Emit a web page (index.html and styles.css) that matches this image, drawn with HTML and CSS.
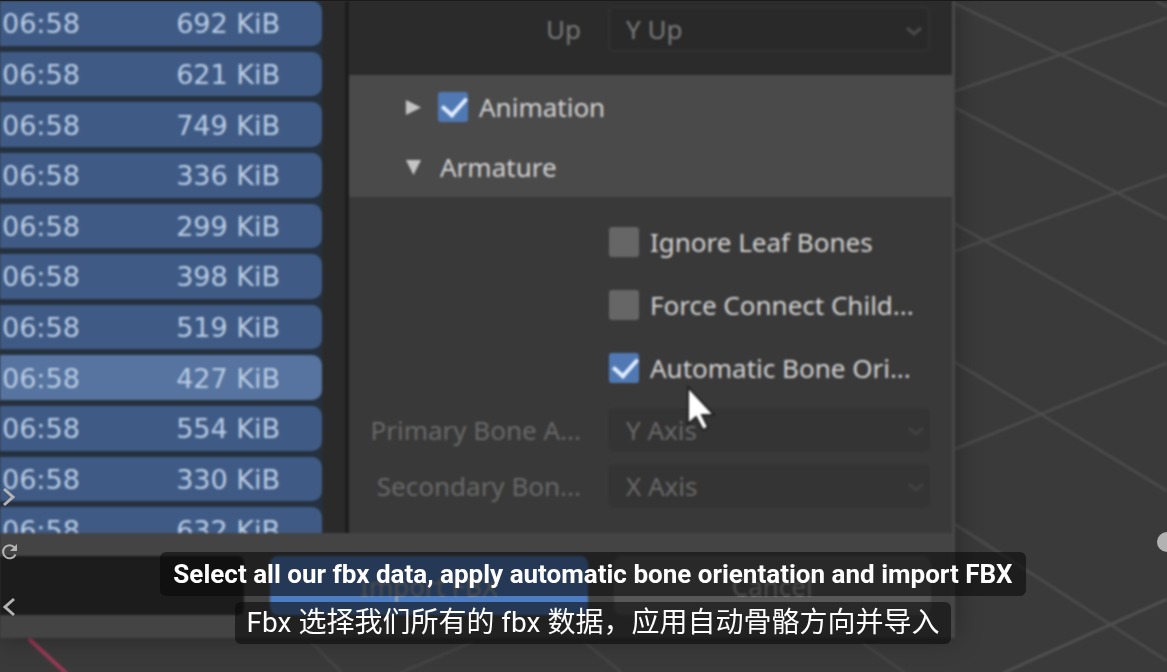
FILE: index.html
```
<!DOCTYPE html>
<html lang="en">
<head>
<meta charset="utf-8">
<title>Import FBX</title>
<link rel="stylesheet" href="styles.css">
</head>
<body>
<main class="player">
  <div class="video">
    <svg class="viewport-grid" viewBox="0 0 1167 672" preserveAspectRatio="none" aria-hidden="true">
      <g fill="none" stroke="#4a4a4a" stroke-width="3">
        <path d="M950 0L1167 105M950 92L1167 17M950 104L1167 218M950 252L1167 174M950 220L1167 343M950 358L1167 490M950 450L1167 362M950 520L1167 660M1156 0L1167 6"/>
        <path stroke="#505050" d="M1003 672L1167 598"/>
        <path stroke="#444" d="M310 640L342 672M400 672L475 640M583 640L622 672M860 640L905 672"/>
      </g>
      <path d="M29 638L67 673" stroke="#963a55" stroke-width="4"/>
    </svg>
    <section class="dialog">
      <div class="content">
        <div class="files">
          <table class="file-table">
            <tbody>
              <tr><td>06:58</td><td class="size">692 KiB</td></tr>
              <tr><td>06:58</td><td class="size">621 KiB</td></tr>
              <tr><td>06:58</td><td class="size">749 KiB</td></tr>
              <tr><td>06:58</td><td class="size">336 KiB</td></tr>
              <tr><td>06:58</td><td class="size">299 KiB</td></tr>
              <tr><td>06:58</td><td class="size">398 KiB</td></tr>
              <tr><td>06:58</td><td class="size">519 KiB</td></tr>
              <tr class="active"><td>06:58</td><td class="size">427 KiB</td></tr>
              <tr><td>06:58</td><td class="size">554 KiB</td></tr>
              <tr><td>06:58</td><td class="size">330 KiB</td></tr>
              <tr><td>06:58</td><td class="size">632 KiB</td></tr>
            </tbody>
          </table>
        </div>
        <div class="options">
          <div class="transform">
            <div class="field">
              <label for="up">Up</label>
              <div class="drop outlined">
                <select id="up" disabled><option>Y Up</option></select>
                <svg class="caret" viewBox="0 0 18 10"><path d="M2 2l7 6 7-6"/></svg>
              </div>
            </div>
          </div>
          <div class="headings">
            <div class="heading">
              <svg class="tri" viewBox="0 0 18 18"><path d="M1 1l16 8-16 8z"/></svg>
              <label class="check"><input type="checkbox" checked>Animation</label>
            </div>
            <div class="heading">
              <svg class="tri" viewBox="0 0 18 18"><path d="M1 1h16L9 17z"/></svg>
              <span>Armature</span>
            </div>
          </div>
          <div class="armature">
            <label class="check option"><input type="checkbox">Ignore Leaf Bones</label>
            <label class="check option"><input type="checkbox">Force Connect Child...</label>
            <label class="check option"><input type="checkbox" checked>Automatic Bone Ori...</label>
            <div class="axes">
              <div class="field">
                <label for="primary">Primary Bone A...</label>
                <div class="drop">
                  <select id="primary" disabled><option>Y Axis</option></select>
                  <svg class="caret" viewBox="0 0 18 10"><path d="M2 2l7 6 7-6"/></svg>
                </div>
              </div>
              <div class="field">
                <label for="secondary">Secondary Bon...</label>
                <div class="drop">
                  <select id="secondary" disabled><option>X Axis</option></select>
                  <svg class="caret" viewBox="0 0 18 10"><path d="M2 2l7 6 7-6"/></svg>
                </div>
              </div>
            </div>
          </div>
        </div>
      </div>
      <div class="footer">
        <input class="filename" type="text" aria-label="File name">
        <button class="btn primary" type="button">Import FBX</button>
        <button class="btn" type="button">Cancel</button>
      </div>
    </section>
    <svg class="cursor" viewBox="0 0 30 50" aria-hidden="true">
      <path d="M3 3v37l8-7 7 13 5-3-6-12h12z"/>
    </svg>
  </div>

  <nav class="side">
    <button type="button" aria-label="Next"><svg viewBox="0 0 18 20"><path d="M4 2l9 8-9 8"/></svg></button>
    <button type="button" aria-label="Reload"><svg viewBox="0 0 18 20"><path d="M14.500 5.500A6.500 6.500 0 1 0 15.500 12.500" stroke-width="2"/><path class="solid" d="M17 2v7h-7z"/></svg></button>
    <button type="button" aria-label="Previous"><svg viewBox="0 0 18 20"><path d="M14 2l-9 8 9 8"/></svg></button>
  </nav>
  <button class="knob" type="button" aria-label="Open side controls"></button>

  <div class="subtitles">
    <p class="line strong">Select all our fbx data, apply automatic bone orientation and import FBX</p>
    <p class="line" lang="zh-CN">Fbx 选择我们所有的 fbx 数据，应用自动骨骼方向并导入</p>
  </div>
</main>
</body>
</html>
```
FILE: styles.css
```
* { box-sizing: border-box; }

body {
  margin: 0;
  background: #3a3a3a;
  font-family: "Noto Sans", "Open Sans", sans-serif;
  font-size: 26px;
  color: #d2d2d2;
}

button, input, select { font: inherit; color: inherit; margin: 0; }

.player {
  position: relative;
  min-height: 100vh;
  overflow: hidden;
  border-top: 1px solid #1a1a1a;
}

.video { filter: blur(1px); }

.viewport-grid {
  position: absolute;
  top: 0;
  left: 0;
  width: 100%;
  height: 100vh;
}

.dialog {
  position: relative;
  width: 82%;
  max-width: calc(100% - 212px);
  background: #444;
  border-right: 3px solid #484848;
  box-shadow: 0 0 24px rgba(0, 0, 0, 0.35);
}

.content {
  display: grid;
  grid-template-columns: 349px 1fr;
  height: 532px;
  overflow: hidden;
}

.files {
  height: 532px;
  overflow: hidden;
  padding-right: 26px;
  background: #2a2a2a;
  border-right: 4px solid #1d1d1d;
}

.file-table {
  width: 322px;
  height: 563px;
  margin-top: -6px;
  border-spacing: 0 6px;
  background: #26313f;
  font-family: "DejaVu Sans", sans-serif;
  font-size: 27px;
  line-height: 32px;
  color: #b9cbe3;
}

.file-table td { padding: 2px 0 0 2px; background: #3f5b85; }
.file-table .size { padding: 2px 42px 0 0; text-align: right; border-radius: 0 10px 10px 0; }
.file-table .active td { background: #56749f; }

.options { display: flex; flex-direction: column; background: #393939; }

.transform { height: 74px; padding-top: 5px; background: #2b2b2b; color: #787878; }

.field {
  display: grid;
  grid-template-columns: 232px 1fr;
  column-gap: 27px;
  align-items: center;
  height: 46px;
  padding-right: 22px;
}
.field > label { text-align: right; white-space: nowrap; }

.drop { position: relative; height: 44px; background: #343434; border-radius: 6px; }
.drop.outlined { background: #292929; border: 2px solid #313131; height: 46px; }
.drop select {
  width: 100%;
  height: 100%;
  padding: 0 18px;
  border: 0;
  background: transparent;
  appearance: none;
  opacity: 1;
}
.drop.outlined select { padding: 0 16px; }
.caret {
  position: absolute;
  right: 5px;
  top: 18px;
  width: 18px;
  height: 10px;
  fill: none;
  stroke: #4a4a4a;
  stroke-width: 3;
}

.headings { padding-top: 2px; background: #4a4a4a; }
.heading {
  display: flex;
  align-items: center;
  gap: 16px;
  height: 60px;
  padding-left: 56px;
}
.heading span { padding-left: 2px; }
.tri { width: 17px; height: 17px; fill: #c4c4c4; }

.check { display: flex; align-items: center; gap: 11px; white-space: nowrap; }
.check input {
  appearance: none;
  width: 30px;
  height: 30px;
  border-radius: 3px;
  background: #666;
}
.check input:checked { background: #5079b4; }
.check input:checked::before {
  content: "";
  display: block;
  width: 11px;
  height: 20px;
  margin: 2px 0 0 9px;
  border: solid #e0ecff;
  border-width: 0 4px 4px 0;
  transform: translateY(-2px) rotate(42deg);
}

.armature { flex: 1; padding-top: 13px; }
.option { height: 63px; padding-left: 260px; }
.axes { display: grid; gap: 10px; padding-top: 8px; color: #686868; }
.axes .caret { stroke: #404040; }

.footer {
  display: grid;
  grid-template-columns: 244px 1fr 1fr;
  column-gap: 26px;
  padding: 23px 21px 23px 0;
}
.filename { width: 100%; height: 59px; border: 0; background: #1c1c1c; border-radius: 0 6px 6px 0; }
.btn { height: 59px; border: 0; border-radius: 8px; background: #575757; color: #a8a8a8; }
.btn.primary { background: #4d7cc0; }

.cursor {
  position: absolute;
  left: 685px;
  top: 383px;
  width: 30px;
  height: 50px;
  fill: #fff;
  stroke: #222;
  stroke-width: 2;
}

.side {
  position: absolute;
  left: 0;
  bottom: 55px;
  display: flex;
  flex-direction: column;
  gap: 35px;
}
.side button { width: 18px; height: 20px; padding: 0; border: 0; background: none; }
.side svg { display: block; width: 18px; height: 20px; fill: none; stroke: #b4b4b4; stroke-width: 3; }
.side .solid { fill: #b4b4b4; stroke: none; }

.knob {
  position: absolute;
  right: -10px;
  bottom: 120px;
  width: 20px;
  height: 20px;
  padding: 0;
  border: 0;
  border-radius: 50%;
  background: #b2b2b2;
}

.subtitles {
  position: absolute;
  left: 0;
  right: 0;
  bottom: 28px;
  display: flex;
  flex-direction: column;
  align-items: center;
  gap: 6px;
  padding-left: 19px;
}
.line {
  margin: 0;
  padding: 0 12px;
  border-radius: 6px;
  background: rgba(8, 8, 8, 0.58);
  color: #fff;
  font-family: Roboto, "Noto Sans CJK SC", sans-serif;
  font-size: 28px;
  line-height: 42px;
  white-space: nowrap;
}
.line.strong { padding: 0 13px; font-size: 26px; font-weight: 700; line-height: 44px; }
```
